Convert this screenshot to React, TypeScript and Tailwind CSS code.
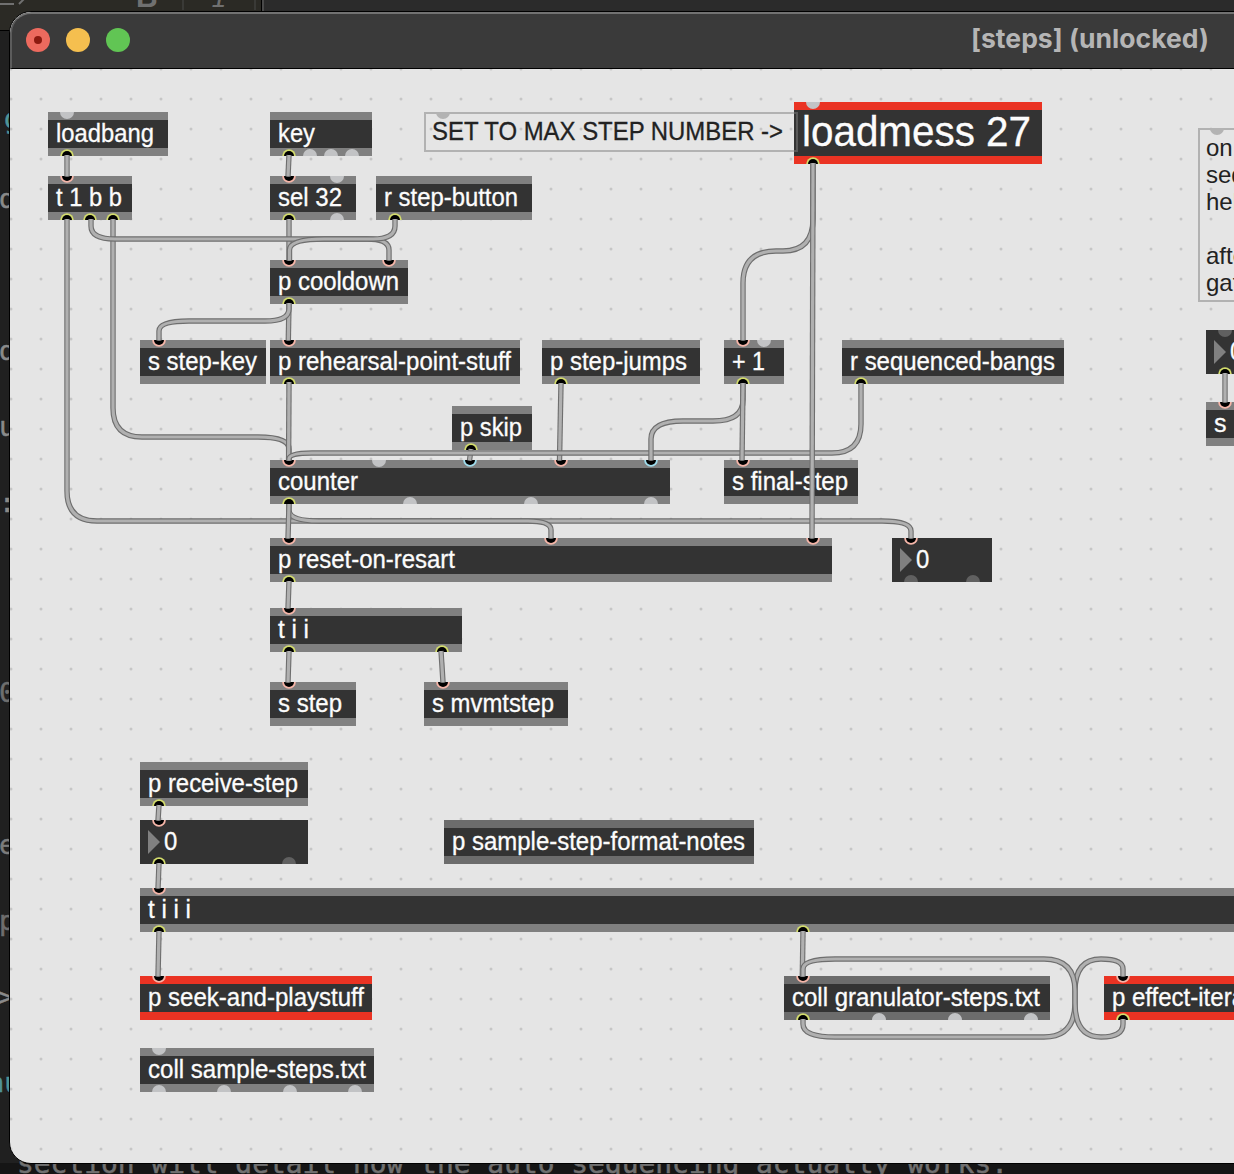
const BAND = { gray: 'bg-[#808080]', dim: 'bg-[#6c6c6c]', red: 'bg-[#ea3323]' };

type Port = [number, 'y' | 'p' | 'b' | 'o' | 'g' | 'd'];
type Box = {
  x: number; y: number; w: number; h?: number; t: string; tw?: number;
  band?: keyof typeof BAND; num?: boolean; size?: number; ins?: Port[]; outs?: Port[];
};

const boxes: Box[] = [
  { x: 48, y: 112, w: 120, t: 'loadbang', tw: 98, ins: [[67, 'o']], outs: [[67, 'y']] },
  { x: 270, y: 112, w: 102, t: 'key', tw: 37, outs: [[289, 'y'], [310, 'o'], [331, 'o'], [352, 'o']] },
  { x: 794, y: 102, w: 248, h: 62, t: 'loadmess 27', tw: 229, size: 42, band: 'red', ins: [[813, 'o']], outs: [[813, 'y']] },
  { x: 48, y: 176, w: 84, t: 't 1 b b', tw: 66, ins: [[67, 'p']], outs: [[67, 'y'], [90, 'y'], [113, 'y']] },
  { x: 270, y: 176, w: 86, t: 'sel 32', tw: 64, ins: [[289, 'p'], [337, 'o']], outs: [[289, 'y'], [337, 'o']] },
  { x: 376, y: 176, w: 156, t: 'r step-button', tw: 134, outs: [[395, 'y']] },
  { x: 270, y: 260, w: 138, t: 'p cooldown', tw: 121, ins: [[289, 'p'], [389, 'p']], outs: [[289, 'y']] },
  { x: 140, y: 340, w: 126, t: 's step-key', tw: 109, ins: [[159, 'p']] },
  { x: 270, y: 340, w: 250, t: 'p rehearsal-point-stuff', tw: 233, ins: [[289, 'p']], outs: [[289, 'y']] },
  { x: 542, y: 340, w: 158, t: 'p step-jumps', tw: 137, outs: [[561, 'y']] },
  { x: 724, y: 340, w: 60, t: '+ 1', tw: 33, ins: [[743, 'p'], [764, 'o']], outs: [[743, 'y']] },
  { x: 842, y: 340, w: 222, t: 'r sequenced-bangs', tw: 205, outs: [[861, 'y']] },
  { x: 452, y: 406, w: 80, t: 'p skip', tw: 62, outs: [[471, 'y']] },
  { x: 270, y: 460, w: 400, t: 'counter', tw: 80, ins: [[289, 'p'], [379, 'o'], [470, 'b'], [560.5, 'p'], [651, 'b']], outs: [[289, 'y'], [409.5, 'o'], [530.5, 'o'], [651, 'o']] },
  { x: 724, y: 460, w: 134, t: 's final-step', tw: 116, ins: [[743, 'p']] },
  { x: 270, y: 538, w: 562, t: 'p reset-on-resart', tw: 177, ins: [[289, 'p'], [551, 'p'], [813, 'p']], outs: [[289, 'y']] },
  { x: 892, y: 538, w: 100, t: '0', num: true, ins: [[911, 'p']], outs: [[911, 'd'], [973, 'd']] },
  { x: 270, y: 608, w: 192, t: 't i i', tw: 31, ins: [[289, 'p']], outs: [[289, 'y'], [442, 'y']] },
  { x: 270, y: 682, w: 86, t: 's step', tw: 64, ins: [[289, 'p']] },
  { x: 424, y: 682, w: 144, t: 's mvmtstep', tw: 122, ins: [[443, 'p']] },
  { x: 140, y: 762, w: 168, t: 'p receive-step', tw: 150, outs: [[159, 'y']] },
  { x: 140, y: 820, w: 168, t: '0', num: true, ins: [[159, 'p']], outs: [[159, 'y'], [289, 'd']] },
  { x: 444, y: 820, w: 310, t: 'p sample-step-format-notes', tw: 293, band: 'dim' },
  { x: 140, y: 888, w: 1100, t: 't i i i', tw: 43, ins: [[159, 'p']], outs: [[159, 'y'], [803, 'y']] },
  { x: 140, y: 976, w: 232, t: 'p seek-and-playstuff', tw: 216, band: 'red', ins: [[159, 'p']] },
  { x: 784, y: 976, w: 266, t: 'coll granulator-steps.txt', tw: 248, band: 'dim', ins: [[803, 'p']], outs: [[803, 'y'], [879, 'o'], [955, 'o'], [1031, 'o']] },
  { x: 1104, y: 976, w: 170, t: 'p effect-iterator', tw: 161, band: 'red', ins: [[1123, 'p']], outs: [[1123, 'y']] },
  { x: 140, y: 1048, w: 234, t: 'coll sample-steps.txt', tw: 218, ins: [[159, 'o']], outs: [[159, 'o'], [224, 'o'], [289.5, 'o'], [355, 'o']] },
  { x: 1206, y: 330, w: 80, t: '0', num: true, ins: [[1225, 'd']], outs: [[1225, 'y']] },
  { x: 1206, y: 402, w: 80, t: 's mvmt', ins: [[1225, 'p']] },
];

const cords = [
  'M67 155V176.5', 'M289 155L288 176.5', 'M289 219V260.5', 'M289 303L288.3 340.5',
  'M561 383L559.5 460.5', 'M471 449L469.5 460.5',
  'M289 581L288 608.5', 'M289 651L288 682.5', 'M441 651L443 682.5', 'M159 805L158 820.5',
  'M159 863L158 888.5', 'M159 931L158 976.5', 'M803 931L802.3 976.5', 'M1225 373V402.5',
  'M67 219V491Q67 521 97 521H882Q911 521 911 531V538.5',
  'M113 219V408Q113 437 142 437H258Q289 437 289 449V460.5',
  'M91 219V226Q91 239 115 239H367Q389 239 389 250V260.5',
  'M395 219V226Q395 239 373 239H324Q289.5 239 289.5 250V260.5',
  'M289 303V309Q289 321 265 321H189Q159 321 159 331V340.5',
  'M289 382L288.6 460.5',
  'M289 504V510Q289 521 319 521H528Q551 521 551 530V538.5',
  'M289 504L288 538.5',
  'M861 383V424Q861 453 832 453H312Q289 453 289 459V460.5',
  'M743 383V400Q743 421 713 421H683Q651 421 651 439V460.5',
  'M743 383L742 460.5',
  'M813 163V219Q813 251 783 251H776Q743 251 743 283V340.5',
  'M813 163L812 538.5',
  'M803 1019V1024Q803 1037 835 1037H1044Q1075 1037 1075 1003V991Q1075 959 1101 959Q1123 959 1123 969V976.5',
  'M1123 1019V1024Q1123 1037 1101 1037Q1075 1037 1075 1003V991Q1075 959 1044 959H835Q803 959 803 969V976.5',
];

const RING = { y: '#d3dc6c', p: '#f5b5a8', b: '#9fdcec' };

function Port({ p, top }: { p: Port; top: boolean }) {
  const k = p[1];
  const cy = top ? 0 : 8;
  return (
    <svg width="16" height="8" viewBox="0 0 16 8" className={`absolute ${top ? 'top-0' : 'bottom-0'} overflow-hidden`} style={{ left: p[0] - 8 }}>
      {k === 'y' || k === 'p' || k === 'b' ? (
        <>
          <circle cx="8" cy={cy} r="6.8" fill={RING[k]} />
          <circle cx="8" cy={cy} r="5" fill="#000" />
        </>
      ) : (
        <circle cx="8" cy={cy} r="7" fill={k === 'o' ? '#c2c3c5' : k === 'd' ? '#606060' : '#b3b3b3'} />
      )}
    </svg>
  );
}

function Label({ t, w, size = 25, color = '#fcfcfc' }: { t: string; w?: number; size?: number; color?: string }) {
  return (
    <svg className="block overflow-visible" width="1" height="28">
      <text x="0" y="22" fontFamily="Liberation Sans, Arial, sans-serif" fontSize={size} fill={color} stroke={color} strokeWidth="0.3" textLength={w} lengthAdjust="spacingAndGlyphs">{t}</text>
    </svg>
  );
}

function Node({ b }: { b: Box }) {
  const band = BAND[b.band ?? 'gray'];
  return (
    <div className="absolute flex flex-col bg-[#333333]" style={{ left: b.x, top: b.y, width: b.w, height: b.h ?? 44 }}>
      {!b.num && <div className={`h-2 ${band}`} />}
      {b.num ? (
        <div className="flex h-full pt-2 pl-2">
          <svg width="16" height="28"><path d="M0 2L12 14L0 26Z" fill="#808080" /></svg>
          <Label t={b.t} w={13.3} />
        </div>
      ) : (
        <div className={`flex-1 pl-2 ${b.size ? 'pt-[14px]' : ''}`}><Label t={b.t} w={b.tw} size={b.size} /></div>
      )}
      {!b.num && <div className={`h-2 ${band}`} />}
      {b.ins?.map((p) => <Port key={'i' + p[0]} p={[p[0] - b.x, p[1]]} top />)}
      {b.outs?.map((p) => <Port key={'o' + p[0]} p={[p[0] - b.x, p[1]]} top={false} />)}
    </div>
  );
}

function Patcher() {
  return (
    <div className="absolute -top-[69px] -left-[10px] h-[1174px] w-[1234px]">
      <svg className="absolute inset-0" width="1234" height="1174">
        <defs>
          <pattern id="grid" width="30" height="30" patternUnits="userSpaceOnUse" x="26" y="84">
            <circle cx="15" cy="15" r="1.5" fill="#c6c6c6" />
          </pattern>
        </defs>
        <rect width="1234" height="1174" fill="url(#grid)" />
      </svg>
      {boxes.map((b) => <Node key={`${b.x}-${b.y}`} b={b} />)}
      <div className="absolute top-[112px] left-[424px] h-10 w-[374px] border-2 border-[#808080]/50 pl-[6px]">
        <svg className="absolute -top-[2px] left-[9px]" width="16" height="8"><circle cx="8" cy="0" r="7" fill="#b3b3b3" /></svg>
        <div className="relative pt-1"><Label t="SET TO MAX STEP NUMBER -&gt;" w={351} color="#222" /></div>
      </div>
      <div className="absolute top-[128px] left-[1198px] h-[174px] w-[200px] border-2 border-[#b2b2b2] pl-[6px]">
        <svg className="absolute -top-[2px] left-[9px]" width="16" height="8"><circle cx="8" cy="0" r="7" fill="#b3b3b3" /></svg>
        <div className="pt-[4px] font-['Liberation_Sans'] text-2xl leading-[27px] whitespace-pre text-[#222]">{'on\nsequence\nhelp\n\nafter\ngate'}</div>
      </div>
      <svg className="absolute inset-0" width="1234" height="1174" fill="none">
        {cords.map((d) => (
          <g key={d}>
            <path d={d} stroke="#6e6e6e" strokeWidth="5.4" />
            <path d={d} stroke="#b0b0b0" strokeWidth="3.2" />
          </g>
        ))}
      </svg>
    </div>
  );
}

const sideGlyphs: [string, number, number, string][] = [
  ['g', 4, 128, '#4f9499'], ['d', -1, 208, '#8a8a8a'], ['d', -1, 360, '#8a8a8a'], ['u', -1, 436, '#8a8a8a'], [':', -1, 512, '#8a8a8a'],
  ['0', -1, 702, '#6e6e6e'], ['e', -1, 854, '#7c7c7c'], ['p', -1, 930, '#6e6e6e'], ['>', -3, 1006, '#8a8a8a'], ['nu', -12, 1092, '#4f9499'],
];

export default function App() {
  return (
    <div className="relative h-[1174px] w-[1234px] overflow-hidden bg-[#202020]">
      <div className="flex h-[31px] bg-[#2b2b2b]">
        <div className="w-[264px] border-r-2 border-b border-r-[#4a4a4a] border-b-black bg-[#2b2a25]">
          <svg width="262" height="20" className="block overflow-hidden" fill="none" stroke="#707070">
            <path d="M0 4H14M19 4L25 -2" strokeWidth="2" />
            <text x="136" y="7" fontFamily="Liberation Sans" fontWeight="bold" fontSize="30" fill="#707070" stroke="none">B</text>
            <text x="211" y="7" fontFamily="Liberation Mono" fontStyle="italic" fontSize="28" fill="#707070" stroke="none">I</text>
            <path d="M183 0V10M255 0V10" stroke="#3a3a37" strokeWidth="2" />
            <path d="M261.5 0V20" stroke="#000" />
          </svg>
        </div>
      </div>
      <svg className="absolute inset-0" width="1234" height="1174">
        {sideGlyphs.map(([t, x, y, c]) => (
          <text key={y} x={x} y={y} fill={c} stroke={c} strokeWidth="0.5" fontFamily="DejaVu Sans Mono, monospace" fontSize="27">{t}</text>
        ))}
        <rect x="0" y="1163" width="1234" height="11" fill="#151515" />
        <text x="17" y="1173" fill="#707070" stroke="#707070" strokeWidth="0.5" fontFamily="DejaVu Sans Mono, monospace" fontSize="27" textLength="991" lengthAdjust="spacingAndGlyphs">section will detail how the auto sequencing actually works.</text>
      </svg>
      <div className="absolute top-[11px] left-[9px] flex h-[1153px] w-[1300px] flex-col overflow-hidden rounded-[22px] border border-black bg-[#e5e5e5]">
        <div className="flex h-[57px] shrink-0 items-center gap-4 rounded-tl-[21px] border-t-2 border-b border-l-2 border-t-[#727272] border-b-black border-l-[#5c5c5c] bg-[#3a3a3a] pb-[2px] pl-[14px]">
          <div className="flex size-6 items-center justify-center rounded-full bg-[#ed6a5e]"><div className="size-2 rounded-full bg-[#8c1a10]" /></div>
          <div className="size-6 rounded-full bg-[#f5bf4f]" />
          <div className="size-6 rounded-full bg-[#61c554]" />
          <svg className="ml-[825px] overflow-visible" width="240" height="28">
            <text x="0" y="21.5" fontFamily="Inter, sans-serif" fontWeight="700" fontSize="26" fill="#b5b5b5" textLength="238" lengthAdjust="spacingAndGlyphs">[steps] (unlocked)</text>
          </svg>
        </div>
        <div className="relative flex-1 overflow-hidden"><Patcher /></div>
      </div>
    </div>
  );
}
